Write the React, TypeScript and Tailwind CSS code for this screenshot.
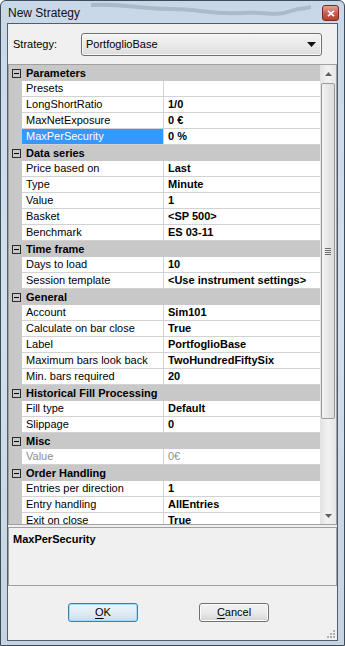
import { Fragment } from 'react'

type Row = {
  cat?: string
  name?: string
  value?: string
  sel?: boolean
  dim?: boolean
}

const rows: Row[] = [
  { cat: 'Parameters' },
  { name: 'Presets', value: '' },
  { name: 'LongShortRatio', value: '1/0' },
  { name: 'MaxNetExposure', value: '0 €' },
  { name: 'MaxPerSecurity', value: '0 %', sel: true },
  { cat: 'Data series' },
  { name: 'Price based on', value: 'Last' },
  { name: 'Type', value: 'Minute' },
  { name: 'Value', value: '1' },
  { name: 'Basket', value: '<SP 500>' },
  { name: 'Benchmark', value: 'ES 03-11' },
  { cat: 'Time frame' },
  { name: 'Days to load', value: '10' },
  { name: 'Session template', value: '<Use instrument settings>' },
  { cat: 'General' },
  { name: 'Account', value: 'Sim101' },
  { name: 'Calculate on bar close', value: 'True' },
  { name: 'Label', value: 'PortfoglioBase' },
  { name: 'Maximum bars look back', value: 'TwoHundredFiftySix' },
  { name: 'Min. bars required', value: '20' },
  { cat: 'Historical Fill Processing' },
  { name: 'Fill type', value: 'Default' },
  { name: 'Slippage', value: '0' },
  { cat: 'Misc' },
  { name: 'Value', value: '0€', dim: true },
  { cat: 'Order Handling' },
  { name: 'Entries per direction', value: '1' },
  { name: 'Entry handling', value: 'AllEntries' },
  { name: 'Exit on close', value: 'True' },
]

// kleines Minus-Kästchen vor der Kategorie
function MinusBox() {
  return (
    <svg width="9" height="9" viewBox="0 0 9 9" className="block">
      <rect x="0.5" y="0.5" width="8" height="8" fill="none" stroke="#2b2b2b" />
      <line x1="2" y1="4.5" x2="7" y2="4.5" stroke="#000" />
    </svg>
  )
}

function GridRow({ row }: { row: Row }) {
  if (row.cat) {
    return (
      <div className="flex h-[16px] shrink-0 items-center bg-[#c8c8c8]">
        <div className="flex w-[13px] justify-end pr-[1px]">
          <MinusBox />
        </div>
        <div className="pl-[4px] font-bold text-black">{row.cat}</div>
      </div>
    )
  }
  return (
    <div className="flex h-[16px] shrink-0">
      <div className="w-[13px] bg-[#c8c8c8]" />
      <div
        className={
          row.sel
            ? 'w-[141px] border-b border-[#d2d2d2] bg-[#3399ff] pl-[4px] text-white'
            : row.dim
              ? 'w-[141px] border-b border-[#d2d2d2] bg-white pl-[4px] text-[#8d8d8d]'
              : 'w-[141px] border-b border-[#d2d2d2] bg-white pl-[4px] text-black'
        }
      >
        {row.name}
      </div>
      <div className="w-[1px] bg-[#d2d2d2]" />
      <div
        className={
          row.dim
            ? 'flex-1 border-b border-[#d2d2d2] bg-white pl-[4px] text-[#8d8d8d]'
            : 'flex-1 border-b border-[#d2d2d2] bg-white pl-[4px] font-bold text-black'
        }
      >
        {row.value}
      </div>
    </div>
  )
}

function ScrollBar() {
  return (
    <div className="flex w-[16px] flex-col bg-linear-to-r from-[#e3e3e3] via-[#f2f2f2] to-[#e6e6e6]">
      <div className="flex h-[17px] items-center justify-center">
        <svg width="7" height="4" viewBox="0 0 7 4">
          <path d="M0 4 L3.5 0 L7 4 Z" fill="#606060" />
        </svg>
      </div>
      <div className="mx-[1px] mt-[1px] flex h-[336px] items-center justify-center rounded-[2px] border border-[#9a9a9a] bg-linear-to-r from-[#f3f3f3] to-[#dcdcdc]">
        <div className="flex flex-col gap-[1px]">
          <div className="h-[1px] w-[6px] bg-[#6f6f6f]" />
          <div className="h-[1px] w-[6px] bg-[#6f6f6f]" />
          <div className="h-[1px] w-[6px] bg-[#6f6f6f]" />
          <div className="h-[1px] w-[6px] bg-[#6f6f6f]" />
        </div>
      </div>
      <div className="flex-1" />
      <div className="flex h-[17px] items-center justify-center">
        <svg width="7" height="4" viewBox="0 0 7 4">
          <path d="M0 0 L3.5 4 L7 0 Z" fill="#606060" />
        </svg>
      </div>
    </div>
  )
}

function Button({ label, focused }: { label: string; focused?: boolean }) {
  return (
    <div
      className={
        focused
          ? 'flex h-[19px] w-[70px] items-center justify-center rounded-[3px] border border-[#3c7fb1] bg-linear-to-b from-[#eef6fb] via-[#e2ecf3] to-[#cfdde8] shadow-[inset_0_0_0_1px_#9fdcf7]'
          : 'flex h-[19px] w-[70px] items-center justify-center rounded-[3px] border border-[#707070] bg-linear-to-b from-[#f2f2f2] via-[#ebebeb] to-[#d4d4d4] shadow-[inset_0_0_0_1px_#fcfcfc]'
      }
    >
      <span className="text-black">
        <span className="underline underline-offset-[2px]">{label[0]}</span>
        {label.slice(1)}
      </span>
    </div>
  )
}

export default function App() {
  return (
    <div className="flex h-[646px] w-[345px] flex-col overflow-hidden rounded-t-[6px] border border-[#3d4b5a] bg-linear-to-b from-[#c9d8e8] via-[#d3dfec] to-[#c6d3e1] font-['Liberation_Sans',Arial,sans-serif] text-[11px] leading-[15px]">
      {/* Titelleiste */}
      <div className="relative flex h-[22px] shrink-0 items-start pl-[7px] pr-[5px]">
        <svg className="absolute left-[90px] top-0 h-[22px] w-[220px] opacity-40" viewBox="0 0 220 22">
          <path
            d="M0 4 C 30 2, 50 8, 80 8 C 110 8, 120 14, 150 12 C 170 10, 185 16, 200 10 C 210 6, 215 8, 220 6"
            fill="none"
            stroke="#7f8c99"
            strokeWidth="4"
            strokeLinecap="round"
          />
        </svg>
        <div className="relative mt-[4px] flex-1 text-[12px] leading-[16px] text-[#111]">New Strategy</div>
        <div className="relative mt-[4px] flex h-[16px] w-[17px] items-center justify-center rounded-[3px] border border-[#7a2a22] bg-linear-to-b from-[#e4a397] via-[#c75f50] to-[#b83c2c]">
          <svg width="8" height="7" viewBox="0 0 8 7">
            <path d="M1 0.8 L7 6.2 M7 0.8 L1 6.2" stroke="#fff" strokeWidth="1.8" />
          </svg>
        </div>
      </div>

      <div className="flex flex-1 flex-col px-[6px] pb-[4px]">
        <div className="relative flex flex-1 flex-col border border-[#4d5e70] bg-[#f0f0f0]">
          {/* Strategie-Auswahl */}
          <div className="mt-[9px] flex h-[23px] shrink-0 items-center">
            <div className="w-[73px] pl-[5px] text-black">Strategy:</div>
            <div className="flex h-[23px] w-[241px] items-center rounded-[3px] border border-[#707070] bg-linear-to-b from-[#f3f3f3] via-[#ebebeb] to-[#dcdcdc] shadow-[inset_0_0_0_1px_#fafafa]">
              <div className="flex-1 pl-[4px] text-black">PortfoglioBase</div>
              <svg width="9" height="5" viewBox="0 0 9 5" className="mr-[5px]">
                <path d="M0 0 L9 0 L4.5 5 Z" fill="#111" />
              </svg>
            </div>
          </div>

          {/* Eigenschaften */}
          <div className="mt-[8px] flex h-[461px] shrink-0 border border-[#a0a0a0] bg-white">
            <div className="flex flex-1 flex-col overflow-hidden">
              {rows.map((row, idx) => (
                <GridRow key={idx} row={row} />
              ))}
            </div>
            <ScrollBar />
          </div>

          {/* Hilfe */}
          <div className="mt-[2px] h-[59px] shrink-0 border border-[#a0a0a0] bg-[#f0f0f0] pl-[4px] pt-[4px]">
            <div className="font-bold text-black">MaxPerSecurity</div>
          </div>

          <div className="mt-[17px] flex shrink-0 gap-[61px] pl-[60px]">
            <Button label="OK" focused />
            <Button label="Cancel" />
          </div>
          <div className="flex-1" />

          <Fragment>
            <div className="absolute bottom-[2px] right-[2px] h-[2px] w-[2px] bg-[#b0b0b0]" />
            <div className="absolute bottom-[2px] right-[5px] h-[2px] w-[2px] bg-[#b0b0b0]" />
            <div className="absolute bottom-[2px] right-[8px] h-[2px] w-[2px] bg-[#b0b0b0]" />
            <div className="absolute bottom-[5px] right-[2px] h-[2px] w-[2px] bg-[#b0b0b0]" />
            <div className="absolute bottom-[5px] right-[5px] h-[2px] w-[2px] bg-[#b0b0b0]" />
            <div className="absolute bottom-[8px] right-[2px] h-[2px] w-[2px] bg-[#b0b0b0]" />
          </Fragment>
        </div>
      </div>
    </div>
  )
}
